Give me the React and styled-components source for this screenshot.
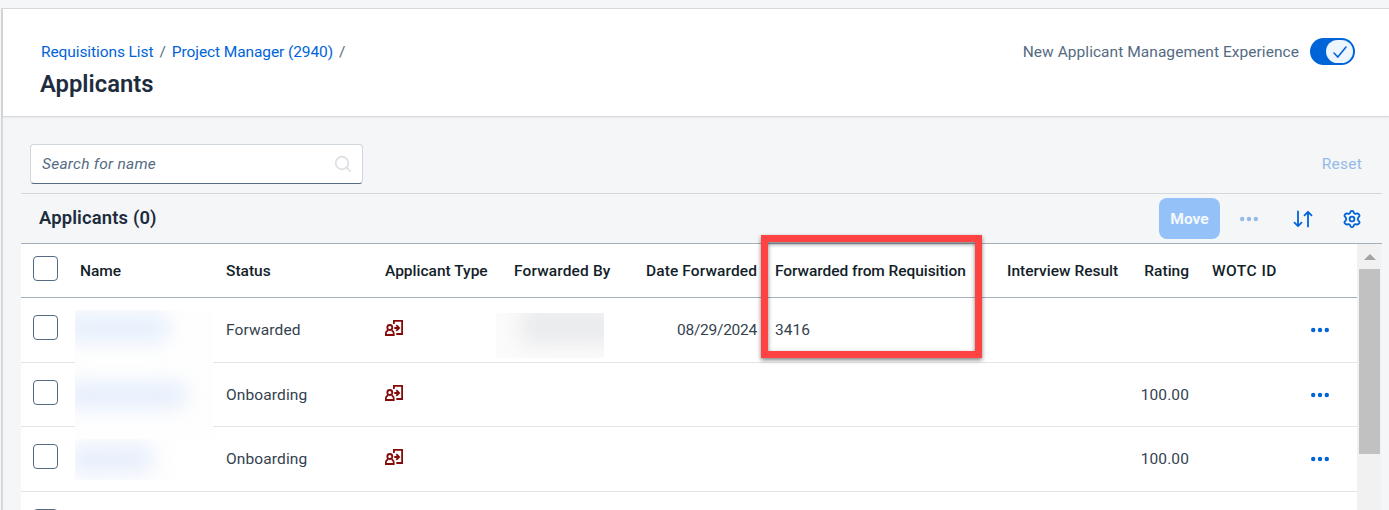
import React from 'react';
import styled, { createGlobalStyle } from 'styled-components';

const GlobalStyle = createGlobalStyle`
  * {
    box-sizing: border-box;
  }

  body {
    margin: 0;
    background: #f5f6f7;
    font-family: Roboto, 'Noto Sans', sans-serif;
    font-size: 15.5px;
    line-height: 18px;
    color: #556b82;
    overflow: hidden;
  }
`;

const Page = styled.div`
  height: 510px;
  padding: 8px 0 0 1px;
  overflow: hidden;
`;

const Shell = styled.div`
  height: 502px;
  border-top: 1px solid #d9d9d9;
  border-left: 2px solid #d5d8da;
`;

const Header = styled.header`
  display: flex;
  justify-content: space-between;
  height: 108px;
  padding: 29px 34px 0 38px;
  background: #fff;
  border-bottom: 1px solid #d5d7da;
  box-shadow: 0 1px 3px rgba(0, 0, 0, 0.06);
`;

const Breadcrumbs = styled.nav`
  display: flex;
  gap: 6px;
  line-height: 28px;
`;

const Crumb = styled.a`
  color: #0064d9;
  letter-spacing: -0.09px;
`;

const PageTitle = styled.h1`
  margin: 2px 0 0 -1px;
  font-size: 23.8px;
  line-height: 32px;
  font-weight: 600;
  color: #1d2d3e;
`;

const Experience = styled.div`
  display: flex;
  gap: 11px;
  height: 28px;
  line-height: 28px;
  letter-spacing: 0.05px;
`;

const Switch = styled.span`
  display: flex;
  justify-content: flex-end;
  width: 45px;
  height: 27px;
  padding: 2px;
  border-radius: 14px;
  background: #0064d9;
`;

const Knob = styled.span`
  display: flex;
  align-items: center;
  justify-content: center;
  width: 27px;
  height: 23px;
  border-radius: 12px;
  background: #edf6ff;
`;

const Content = styled.main`
  padding: 27px 7px 0 18px;
`;

const FilterBar = styled.div`
  display: flex;
  align-items: center;
  justify-content: space-between;
  height: 50px;
  padding: 0 20px 10px 9px;
  border-bottom: 1px solid #d5d7da;
`;

const SearchField = styled.div`
  display: flex;
  align-items: center;
  justify-content: space-between;
  width: 333px;
  height: 40px;
  padding: 0 10px 0 11px;
  border: 1px solid #d0d7dd;
  border-bottom-color: #556b82;
  border-radius: 4px;
  background: #fff;
  font-style: italic;
  letter-spacing: 0.25px;
`;

const Reset = styled.span`
  color: #94bbe9;
  letter-spacing: 0.25px;
`;

const Toolbar = styled.div`
  display: flex;
  align-items: center;
  height: 50px;
  padding: 0 21px 0 18px;
  border-bottom: 1px solid #a3b0bc;
`;

const TableTitle = styled.h2`
  flex: 1;
  margin: 0;
  padding-bottom: 2px;
  font-size: 18.4px;
  letter-spacing: 0.15px;
  font-weight: 600;
  color: #1d2d3e;
`;

const MoveButton = styled.button`
  width: 61px;
  height: 41px;
  padding: 0;
  border: 0;
  border-radius: 8px;
  background: #94c1f7;
  color: #f4f9ff;
  font: 700 15.5px Roboto, sans-serif;
`;

const ToolbarIcon = styled.span`
  display: flex;
  margin-left: ${({ $gap }) => $gap}px;
`;

const TableArea = styled.div`
  display: flex;
  height: 266px;
`;

const Table = styled.div`
  position: relative;
  width: 1336px;
  height: 266px;
  background: #fff;
  overflow: hidden;
`;

const Row = styled.div`
  display: grid;
  grid-template-columns: 59px 146px 159px 129px 112px 131px 18px 232px 122px 60px 23px 99px 46px;
  align-items: center;
  height: ${({ $height }) => $height}px;
  border-bottom: 1px solid ${({ $head }) => ($head ? '#a3b0bc' : '#e2e4e6')};
  color: ${({ $head }) => ($head ? '#131e29' : '#34424f')};
  font-weight: ${({ $head }) => ($head ? 500 : 400)};
  white-space: nowrap;
`;

const Cell = styled.span`
  display: flex;
  justify-content: ${({ $end }) => ($end ? 'flex-end' : 'flex-start')};
  grid-column: ${({ $col }) => $col};
  padding-bottom: ${({ $lift }) => $lift || 0}px;
  letter-spacing: ${({ $spacing }) => $spacing || 0}px;
`;

const CheckCell = styled.span`
  display: flex;
  grid-column: 1;
  align-self: start;
  padding: ${({ $top }) => $top}px 0 0 12px;
`;

const Checkbox = styled.span`
  width: 25px;
  height: 25px;
  border: 1px solid #556b82;
  border-radius: 4px;
  background: #fff;
`;

const Redacted = styled.span`
  position: absolute;
  left: ${({ $x }) => $x}px;
  top: ${({ $y }) => $y}px;
  width: ${({ $w }) => $w}px;
  height: ${({ $h }) => $h}px;
  background: ${({ $fill }) => $fill};
  overflow: hidden;
`;

const Smudge = styled.span`
  position: absolute;
  left: ${({ $x }) => $x}px;
  top: ${({ $y }) => $y}px;
  width: ${({ $w }) => $w}px;
  height: ${({ $h }) => $h}px;
  border-radius: 12px;
  background: ${({ $color }) => $color};
  filter: blur(10px);
`;

const Highlight = styled.div`
  position: absolute;
  left: 761px;
  top: 235px;
  width: 221px;
  height: 123px;
  border: 7px solid #ff4343;
  filter: drop-shadow(0 2px 2px rgba(0, 0, 0, 0.5));
`;

const Scrollbar = styled.div`
  width: 24px;
  padding: 10px 2px 0;
  background: #f1f1f1;
`;

const ScrollUp = styled.div`
  width: 0;
  height: 0;
  margin: 0 auto 0 5px;
  border: 6px solid transparent;
  border-top: 0;
  border-bottom-color: #a3a3a3;
`;

const Thumb = styled.div`
  width: 21px;
  height: 185px;
  margin-top: 9px;
  background: #c1c1c1;
`;

const Dots = ({ color = '#0064d9' }) => (
  <svg width="18" height="6" viewBox="0 0 18 6" fill={color}>
    <circle cx="2.2" cy="3" r="2.2" />
    <circle cx="9" cy="3" r="2.2" />
    <circle cx="15.8" cy="3" r="2.2" />
  </svg>
);

const SearchIcon = () => (
  <svg width="18" height="18" viewBox="0 0 18 18" fill="none" stroke="#dce0e4" strokeWidth="1.7" strokeLinecap="round">
    <circle cx="8" cy="8" r="6.3" />
    <path d="M12.6 12.6 L16.2 16.2" />
  </svg>
);

const CheckIcon = () => (
  <svg width="16" height="14" viewBox="0 0 16 14" fill="none" stroke="#0064d9" strokeWidth="1.6" strokeLinecap="round">
    <path d="M2 8 L5.8 12 L14 2" />
  </svg>
);

const SortIcon = () => (
  <svg width="20" height="18" viewBox="0 0 20 18" fill="none" stroke="#0064d9" strokeWidth="1.8" strokeLinecap="round" strokeLinejoin="round">
    <path d="M5 1.5 V16 M1.5 12.7 L5 16.2 L8.5 12.7" />
    <path d="M15 16.5 V2 M11.5 5.3 L15 1.8 L18.5 5.3" />
  </svg>
);

const GearIcon = () => (
  <svg width="18" height="18" viewBox="0 0 18 18" fill="none" stroke="#0064d9" strokeWidth="1.8" strokeLinejoin="round">
    <path d="M9 0.9 Q10.6 0.9 11 3.2 Q12 4.2 13.3 3.7 Q15.4 3 16.3 4.8 Q17.1 6.3 15.2 7.6 Q14.5 9 15.2 10.4 Q17.1 11.7 16.3 13.2 Q15.4 15 13.3 14.3 Q12 13.8 11 14.8 Q10.6 17.1 9 17.1 Q7.4 17.1 7 14.8 Q6 13.8 4.7 14.3 Q2.6 15 1.7 13.2 Q0.9 11.7 2.8 10.4 Q3.5 9 2.8 7.6 Q0.9 6.3 1.7 4.8 Q2.6 3 4.7 3.7 Q6 4.2 7 3.2 Q7.4 0.9 9 0.9 Z" />
    <circle cx="9" cy="9" r="2.4" />
  </svg>
);

const ForwardedIcon = () => (
  <svg width="18" height="16" viewBox="0 0 18 16" fill="none" stroke="#870a0a" strokeWidth="1.8">
    <circle cx="4.8" cy="7.5" r="2.5" />
    <path d="M3 10.3 Q0.9 11.2 0.9 13 V15 H8.7 V13 Q8.7 11.2 6.6 10.3" />
    <path d="M8.9 4 V0.9 H17.1 V14 H11.3" />
    <path d="M9.3 8 H14 M11.3 5.2 L14.1 8 L11.3 10.8" />
  </svg>
);

const applicants = [
  { status: 'Forwarded', date: '08/29/2024', requisition: '3416', height: 65 },
  { status: 'Onboarding', rating: '100.00', height: 64 },
  { status: 'Onboarding', rating: '100.00', height: 65 },
];

export default function App() {
  return (
    <>
      <GlobalStyle />
      <Page>
        <Shell>
          <Header>
            <div>
              <Breadcrumbs>
                <Crumb>Requisitions List</Crumb>
                <span>/</span>
                <Crumb>Project Manager (2940)</Crumb>
                <span>/</span>
              </Breadcrumbs>
              <PageTitle>Applicants</PageTitle>
            </div>
            <Experience>
              <span>New Applicant Management Experience</span>
              <Switch>
                <Knob>
                  <CheckIcon />
                </Knob>
              </Switch>
            </Experience>
          </Header>
          <Content>
            <FilterBar>
              <SearchField>
                <span>Search for name</span>
                <SearchIcon />
              </SearchField>
              <Reset>Reset</Reset>
            </FilterBar>
            <Toolbar>
              <TableTitle>Applicants (0)</TableTitle>
              <MoveButton>Move</MoveButton>
              <ToolbarIcon $gap={20}>
                <Dots color="#94bbe9" />
              </ToolbarIcon>
              <ToolbarIcon $gap={35}>
                <SortIcon />
              </ToolbarIcon>
              <ToolbarIcon $gap={30}>
                <GearIcon />
              </ToolbarIcon>
            </Toolbar>
            <TableArea>
              <Table>
                <Row $head $height={54}>
                  <CheckCell $top={12}>
                    <Checkbox />
                  </CheckCell>
                  <Cell $col={2}>Name</Cell>
                  <Cell $col={3}>Status</Cell>
                  <Cell $col={4}>Applicant Type</Cell>
                  <Cell $col={5} $spacing={0.13}>Forwarded By</Cell>
                  <Cell $col={6} $spacing={0.1} $end>Date Forwarded</Cell>
                  <Cell $col={8} $spacing={-0.06}>Forwarded from Requisition</Cell>
                  <Cell $col={9}>Interview Result</Cell>
                  <Cell $col={10} $end>Rating</Cell>
                  <Cell $col={12} $spacing={0.45}>WOTC ID</Cell>
                </Row>
                {applicants.map(({ status, date, requisition, rating, height }, i) => (
                  <Row key={i} $height={height}>
                    <CheckCell $top={17}>
                      <Checkbox />
                    </CheckCell>
                    <Cell $col={3} $spacing={0.13}>{status}</Cell>
                    <Cell $col={4} $lift={4}>
                      <ForwardedIcon />
                    </Cell>
                    <Cell $col={6} $spacing={-0.25} $end>{date}</Cell>
                    <Cell $col={8}>{requisition}</Cell>
                    <Cell $col={10} $spacing={0.1} $end>{rating}</Cell>
                    <Cell $col={13}>
                      <Dots />
                    </Cell>
                  </Row>
                ))}
                <Row $height={65}>
                  <CheckCell $top={17}>
                    <Checkbox />
                  </CheckCell>
                </Row>
                <Redacted $x={54} $y={66} $w={138} $h={129} $fill="#fefefe">
                  <Smudge $x={-12} $y={4} $w={106} $h={28} $color="#e5effb" />
                  <Smudge $x={-12} $y={72} $w={124} $h={26} $color="#e5eefb" />
                </Redacted>
                <Redacted $x={54} $y={195} $w={100} $h={41} $fill="#fefefe">
                  <Smudge $x={-6} $y={6} $w={84} $h={28} $color="#e6eefb" />
                </Redacted>
                <Redacted $x={475} $y={69} $w={108} $h={45} $fill="#fbfbfb">
                  <Smudge $x={24} $y={-6} $w={100} $h={38} $color="#eaebed" />
                </Redacted>
              </Table>
              <Scrollbar>
                <ScrollUp />
                <Thumb />
              </Scrollbar>
            </TableArea>
          </Content>
        </Shell>
      </Page>
      <Highlight />
    </>
  );
}
